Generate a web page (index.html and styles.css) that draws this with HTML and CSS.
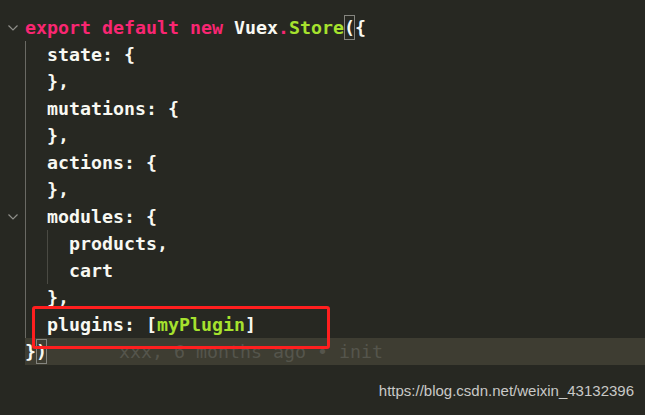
FILE: index.html
```html
<!DOCTYPE html>
<html>
<head>
<meta charset="utf-8">
<link rel="stylesheet" href="styles.css">
</head>
<body>
<div class="editor">
  <div class="line"><span class="gutter"><svg class="fold" viewBox="0 0 10 6" width="10" height="6"><path d="M0.5 0.5 L5 5 L9.5 0.5" fill="none" stroke="#8f8f8a" stroke-width="1.2"/></svg></span><span class="code"><span class="kw">export</span> <span class="kw">default</span> <span class="kw">new</span> Vuex<span class="kw">.</span><span class="fn">Store</span><span class="match">(</span>{</span></div>
  <div class="line"><span class="gutter"></span><span class="code"><span class="ind g1"></span>state: {</span></div>
  <div class="line"><span class="gutter"></span><span class="code"><span class="ind g1"></span>},</span></div>
  <div class="line"><span class="gutter"></span><span class="code"><span class="ind g1"></span>mutations: {</span></div>
  <div class="line"><span class="gutter"></span><span class="code"><span class="ind g1"></span>},</span></div>
  <div class="line"><span class="gutter"></span><span class="code"><span class="ind g1"></span>actions: {</span></div>
  <div class="line"><span class="gutter"></span><span class="code"><span class="ind g1"></span>},</span></div>
  <div class="line"><span class="gutter"><svg class="fold" viewBox="0 0 10 6" width="10" height="6"><path d="M0.5 0.5 L5 5 L9.5 0.5" fill="none" stroke="#8f8f8a" stroke-width="1.2"/></svg></span><span class="code"><span class="ind g1"></span>modules: {</span></div>
  <div class="line"><span class="gutter"></span><span class="code"><span class="ind g1"></span><span class="ind g2"></span>products,</span></div>
  <div class="line"><span class="gutter"></span><span class="code"><span class="ind g1"></span><span class="ind g2"></span>cart</span></div>
  <div class="line"><span class="gutter"></span><span class="code"><span class="ind g1"></span>},</span></div>
  <div class="line"><span class="gutter"></span><span class="code"><span class="ind g1"></span>plugins: [<span class="fn">myPlugin</span>]</span></div>
  <div class="line current"><span class="gutter"></span><span class="code">}<span class="match">)</span><span class="blame">xxx, 6 months ago • init</span></span></div>
  <div class="highlight-box"></div>
</div>
<div class="footer">https://blog.csdn.net/weixin_43132396</div>
</body>
</html>
```

FILE: styles.css
```css
html, body {
  margin: 0;
  padding: 0;
  background: #272822;
  width: 645px;
  height: 415px;
  overflow: hidden;
}

.editor {
  position: relative;
  padding-top: 14px;
  font-family: "DejaVu Sans Mono", "Liberation Mono", monospace;
  font-size: 18.27px;
  font-weight: bold;
  color: #f8f8f2;
}

.line {
  display: flex;
  height: 27px;
  line-height: 27px;
  white-space: pre;
}

.gutter {
  width: 25px;
  flex: none;
  display: flex;
  align-items: center;
  justify-content: flex-start;
  padding-left: 8px;
  box-sizing: border-box;
}

.fold {
  display: block;
}

.code {
  flex: 1;
  display: block;
  height: 27px;
}

.current .code {
  background: #3e3d32;
}

.kw { color: #f92672; }
.fn { color: #a6e22e; }

.match {
  box-sizing: border-box;
  outline: 1px solid #85857f;
  outline-offset: -1px;
  display: inline-block;
  line-height: 25px;
  height: 25px;
  vertical-align: top;
  margin-top: 1px;
}

.ind {
  display: inline-block;
  vertical-align: top;
  width: 22px;
  height: 27px;
  box-sizing: border-box;
  border-left: 1px solid #6a6a64;
}

.ind.g2 {
  border-left-color: #4a4a43;
}

.blame {
  margin-left: 72px;
  color: #55554c;
  font-weight: normal;
}

.highlight-box {
  position: absolute;
  left: 32px;
  top: 306px;
  width: 298px;
  height: 43px;
  box-sizing: border-box;
  border: 3px solid #ff1f1f;
  border-radius: 3px;
}

.footer {
  margin-top: 17px;
  padding-right: 11px;
  text-align: right;
  font-family: "Liberation Sans", Arial, sans-serif;
  font-size: 15px;
  color: #c9c9c7;
}
```
